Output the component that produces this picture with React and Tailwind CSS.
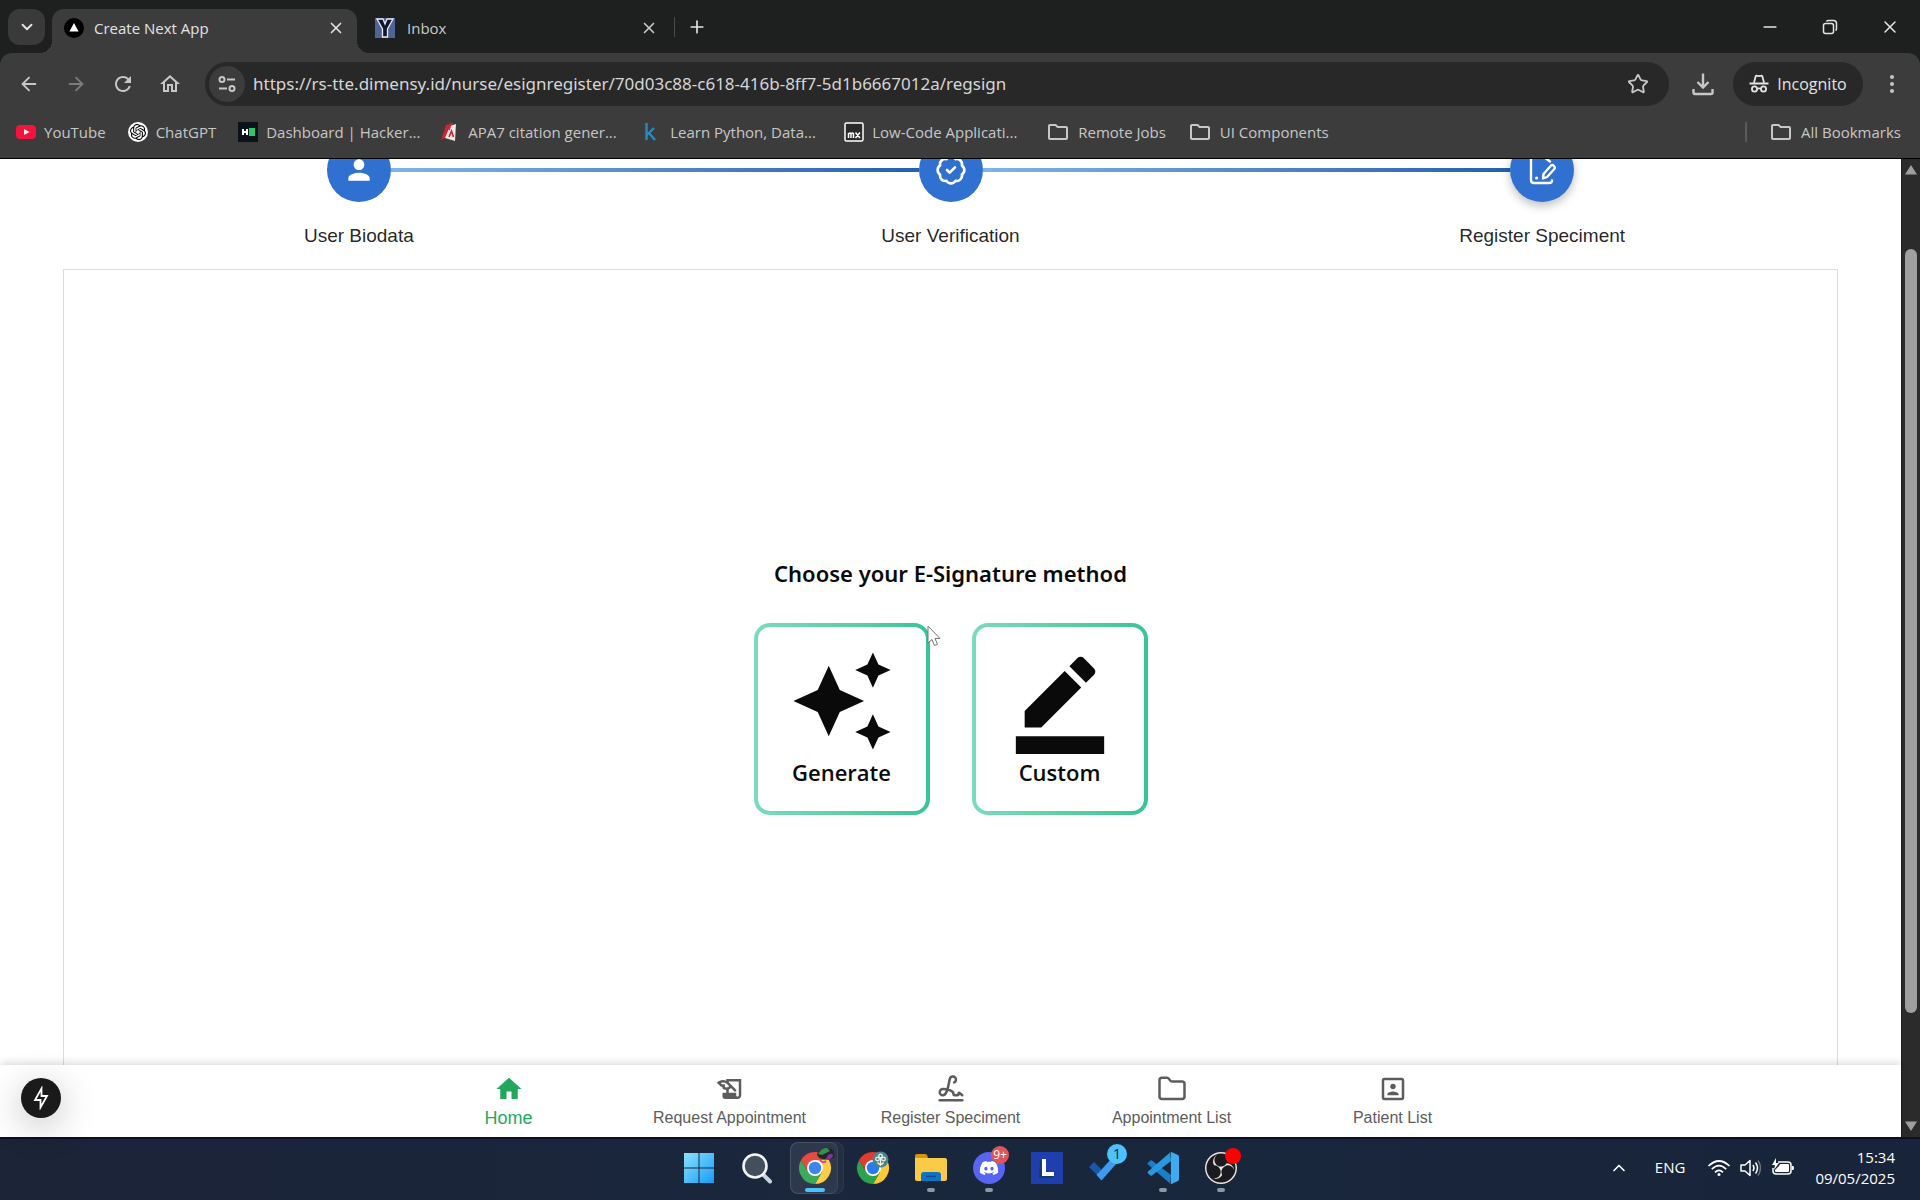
import { ArrowLeft, ArrowRight, BadgeCheck, ChevronDown, ChevronUp, Folder, Minus, MoreVertical, Plus, Signature, Star, X } from "lucide-react";
import { FaDiscord } from "react-icons/fa";
import { MdAutoAwesome, MdBorderColor, MdHome, MdOutlineFolder, MdOutlineHistoryEdu, MdOutlineHome, MdPerson, MdPortrait, MdRefresh } from "react-icons/md";
import { SiObsstudio, SiOpenai } from "react-icons/si";

/* ---------- icons ---------- */

function SiteInfoIcon() {
    return (
        <svg className="w-5 h-5" viewBox="0 0 20 20" fill="none" stroke="currentColor" strokeWidth="2">
            <circle cx="5" cy="5.5" r="2.5" />
            <path d="M10 5.5h8M2 14.5h8" />
            <circle cx="15" cy="14.5" r="2.5" />
        </svg>
    );
}

function DownloadIcon() {
    return (
        <svg className="w-6 h-6" viewBox="0 0 24 24" fill="none" stroke="currentColor" strokeWidth="2.4">
            <path d="M12 1.5v14M6.5 10l5.5 5.5 5.5-5.5M2.5 17v3.500q0 1.500 1.500 1.500h16q1.500 0 1.500-1.500V17" />
        </svg>
    );
}

function IncognitoIcon() {
    return (
        <svg className="w-5 h-5" viewBox="0 0 20 20" fill="none" stroke="currentColor" strokeWidth="1.8">
            <path d="M5 8.500 6.700 2.200q.2-.7.900-.5l2.400.5 2.400-.5q.7-.2.9.5L15 8.500M.5 9.500h19" />
            <circle cx="5.500" cy="15" r="2.600" />
            <circle cx="14.500" cy="15" r="2.600" />
            <path d="M8 14.800q2-1 4 0" />
        </svg>
    );
}

function RestoreIcon() {
    return (
        <svg className="w-4 h-4" viewBox="0 0 16 16" fill="none" stroke="currentColor" strokeWidth="1.5">
            <rect x="1.500" y="4.500" width="10" height="10" rx="2" />
            <path d="M4.500 2.500Q5 1.500 6.500 1.500h5q3 0 3 3v5q0 1.500-1 2" />
        </svg>
    );
}

function NextIcon() {
    return (
        <svg className="w-5 h-5" viewBox="0 0 20 20">
            <circle cx="10" cy="10" r="10" fill="#000" />
            <path d="M10 5l4.600 8.500H5.400z" fill="#fff" />
        </svg>
    );
}

function InboxIcon() {
    return (
        <svg className="w-5 h-5" viewBox="0 0 20 20">
            <rect width="20" height="20" fill="#4f6394" />
            <path d="M2 1h6l2 5 2-5h6l-5.500 10v8h-5v-8z" fill="#10152c" stroke="#e8ebf5" strokeWidth="1.300" />
        </svg>
    );
}

function YoutubeIcon() {
    return (
        <svg className="w-5 h-5" viewBox="0 0 20 20">
            <rect y="3" width="20" height="14" rx="4" fill="#f5123c" />
            <path d="M8 7l5.500 3L8 13z" fill="#fff" />
        </svg>
    );
}

function ChatGptIcon() {
    return (
        <span className="w-5 h-5 rounded-full bg-white text-black flex items-center justify-center">
            <SiOpenai className="w-4 h-4" />
        </span>
    );
}

function HackerRankIcon() {
    return (
        <svg className="w-5 h-5" viewBox="0 0 20 20">
            <rect width="20" height="20" fill="#0c121c" />
            <path d="M5 7v6M9 7v6M5 10h4" stroke="#fff" strokeWidth="2" />
            <rect x="11" y="6" width="6" height="8" fill="#2ec866" />
        </svg>
    );
}

function ApaIcon() {
    return (
        <svg className="w-5 h-5" viewBox="0 0 20 20">
            <path d="M6 3l7-2-3 12-9 5z" fill="#cf2334" />
            <path d="M10 4l6-2-1 17-10-3z" fill="#f3e9e9" />
            <path d="M9 15l2.500-6 2 6M11 1L9 8" stroke="#cf2334" strokeWidth="1.600" fill="none" />
        </svg>
    );
}

function KaggleIcon() {
    return (
        <svg className="w-5 h-5" viewBox="0 0 20 20" fill="none" stroke="#2a8cc4" strokeWidth="2.300">
            <path d="M4.500 1v17M12 6l-7 7M7 11l6 7" />
        </svg>
    );
}

function MendixIcon() {
    return (
        <svg className="w-5 h-5" viewBox="0 0 20 20" fill="none" stroke="#fff">
            <rect x="1" y="1" width="18" height="18" rx="1.500" fill="#2a2a2a" strokeWidth="1.500" />
            <path d="M4.500 16v-5M4.500 12q2-2 2.500 0v4M7 12q2-2 2.500 0v4M11.500 10.500l4.500 5.500M16 10.500L11.500 16" strokeWidth="1.500" />
        </svg>
    );
}

function EditDocIcon() {
    return (
        <svg className="w-8 h-8" viewBox="0 0 32 32" fill="none" stroke="#fff" strokeWidth="2.400" strokeLinecap="round" strokeLinejoin="round">
            <path d="M18 3H8Q5 3 5 6v20q0 3 3 3h15q3 0 3-2.500" />
            <path d="M18 3l6 4.500" />
            <path d="M17 24.500l.5-4.500 7.500-8.500q1.500-1 3 .5t.3 3l-7.300 8z" />
            <path d="M10.500 24h.2" strokeWidth="3" />
        </svg>
    );
}

function BoltIcon() {
    return (
        <svg className="w-6 h-6" viewBox="0 0 24 24" fill="none" stroke="#fff" strokeWidth="1.800" strokeLinejoin="miter">
            <path d="M12.500 2.500v7.500h5.500l-6.500 11.500V14H6z" />
        </svg>
    );
}

function WindowsIcon() {
    return (
        <svg className="w-8 h-8" viewBox="0 0 32 32">
            <defs>
                <linearGradient id="win" x1="0" y1="0" x2="32" y2="32" gradientUnits="userSpaceOnUse">
                    <stop stopColor="#8fe3ff" />
                    <stop offset="1" stopColor="#129af5" />
                </linearGradient>
            </defs>
            <path d="M1 1h14.500v14.500H1zM16.500 1H31v14.500H16.500zM1 16.500h14.500V31H1zM16.500 16.500H31V31H16.500z" fill="url(#win)" />
        </svg>
    );
}

function SearchIcon() {
    return (
        <svg className="w-8 h-8" viewBox="0 0 32 32" fill="none">
            <path d="M21.500 22l7.500 7.500" stroke="#c9d2de" strokeWidth="4" strokeLinecap="round" />
            <circle cx="14" cy="14" r="11.500" fill="#434e5e" stroke="#f2f4f7" strokeWidth="2.600" />
        </svg>
    );
}

function ChromeIcon({ children }) {
    return (
        <svg className="w-8 h-8 overflow-visible" viewBox="0 0 32 32">
            <path d="M16 16V8h13.860A16 16 0 0 1 16 32l7-12z" fill="#fcc934" />
            <path d="M16 16l7 4-7 12A16 16 0 0 1 2.140 8L9 20z" fill="#2ba24c" />
            <path d="M9 20L2.140 8A16 16 0 0 1 29.860 8H16z" fill="#e33b2e" />
            <circle cx="16" cy="16" r="8" fill="#fff" />
            <circle cx="16" cy="16" r="6.200" fill="#2a7bea" />
            {children}
        </svg>
    );
}

function ChromeMaskIcon() {
    return (
        <ChromeIcon>
            <path d="M18 2q6-8 10-5 8-1 7 5l1 3q-4 3-9 2-8 1-9-5z" fill="#111" />
            <path d="M19 2q4-7 9-6l3 3-8 4z" fill="#1e8a3c" />
            <path d="M29 3q5-3 5 1-3 5-7 3z" fill="#7a1fa0" />
            <path d="M21 8q3 4 6 1" stroke="#b53bc9" strokeWidth="2" fill="none" />
        </ChromeIcon>
    );
}

function ChromeProfileIcon() {
    return (
        <ChromeIcon>
            <circle cx="23.500" cy="7.500" r="8" fill="#4b8489" />
            <g fill="none" stroke="#e9f2e8" strokeWidth="1.300">
                <circle cx="23.500" cy="4" r="1.800" />
                <circle cx="20.500" cy="7" r="1.800" />
                <circle cx="26.500" cy="7" r="1.800" />
                <path d="M23.500 6v8M20.500 10.500q1.500 2 3 2t3-2" />
            </g>
        </ChromeIcon>
    );
}

function ExplorerIcon() {
    return (
        <svg className="w-8 h-8" viewBox="0 0 32 32">
            <path d="M0 4q0-2 2-2h8q2 0 2.500 2l.5 3H0z" fill="#d89313" />
            <path d="M0 6h30q2 0 2 2v19q0 2-2 2H2q-2 0-2-2z" fill="#fbcb47" />
            <path d="M6 29v-6q0-3 3-3h14q3 0 3 3v6z" fill="#1173c4" />
            <path d="M11 24.500h10" stroke="#0b4f91" strokeWidth="1.500" />
        </svg>
    );
}

function DiscordIcon() {
    return (
        <span className="relative w-8 h-8 rounded-full bg-[#5865f2] text-white flex items-center justify-center">
            <FaDiscord className="w-5 h-5" />
            <span className="absolute -top-1.5 -right-1 w-[18px] h-[18px] rounded-full bg-[#e0555a] text-[12px] leading-[18px] text-center">9+</span>
        </span>
    );
}

function LIcon() {
    return (
        <svg className="w-8 h-8" viewBox="0 0 32 32">
            <rect width="32" height="32" fill="#1f3fae" />
            <path d="M9 7l-1 19h14l2-4-9-3z" fill="#123a6b" />
            <path d="M13 7v15h10" fill="none" stroke="#fff" strokeWidth="4" />
        </svg>
    );
}

function TodoIcon() {
    return (
        <span className="relative flex">
            <svg className="w-8 h-8" viewBox="0 0 32 32">
                <path d="M5 10l9 9-5 5L0 15z" fill="#1b57a8" />
                <path d="M23 6l5 5-15.500 17.500L7.500 23z" fill="#3f9bf0" />
            </svg>
            <span className="absolute -top-2 -right-1.5 w-5 h-5 rounded-full bg-[#4cc2ff] text-[#10202f] text-[14px] leading-5 text-center">1</span>
        </span>
    );
}

function VsCodeIcon() {
    return (
        <svg className="w-8 h-8" viewBox="0 0 32 32">
            <path d="M3.500 8.500L1 10.500q-1 1 0 2L23 31.500l1-8.500L5 8.500q-.8-.6-1.500 0z" fill="#1a7fc9" />
            <path d="M3.500 23.500L1 21.500q-1-1 0-2L23 .5l1 8.500L5 23.500q-.8.600-1.500 0z" fill="#2a98dc" />
            <path d="M23 .5q.8-.8 2-.3l6 2.900q1 .5 1 1.600v22.600q0 1.100-1 1.600l-6 2.900q-1.200.500-2-.3.900.600.900-1.200V1.800q0-1.700-.9-1.300z" fill="#3cabf0" />
        </svg>
    );
}

function ObsIcon() {
    return (
        <span className="relative w-8 h-8 rounded-full bg-[#1b1b1f] text-[#e6e6e6] flex">
            <SiObsstudio className="w-8 h-8" />
            <span className="absolute -top-1 -right-1 w-4 h-4 rounded-full bg-[#ff0000]" />
        </span>
    );
}

function WifiIcon() {
    return (
        <svg className="w-6 h-5" viewBox="0 0 24 20" fill="none" stroke="currentColor" strokeWidth="1.700">
            <path d="M1.500 8q10.500-10 21 0M4.800 11.200q7.200-7 14.400 0M8 14.300q4-4 8 0" />
            <circle cx="12" cy="16.500" r="1.500" fill="currentColor" stroke="none" />
        </svg>
    );
}

function SpeakerIcon() {
    return (
        <svg className="w-6 h-5" viewBox="0 0 24 20" fill="none" stroke="currentColor" strokeWidth="1.500">
            <path d="M2 7h4l5-4.500v15L6 13H2z" strokeLinejoin="round" />
            <path d="M14 7q2 3 0 6M16.500 4.500q4 5.500 0 11" />
            <path d="M19 2.500q5 7.500 0 15" opacity=".35" />
        </svg>
    );
}

function BatteryIcon() {
    return (
        <svg className="w-6 h-5" viewBox="0 0 24 20" fill="none" stroke="currentColor" strokeWidth="1.500">
            <path d="M7 4h10q3 0 3 3v6q0 3-3 3H5q-3 0-3-3v-3" />
            <path d="M9 6h8q1 0 1 1v6q0 1-1 1H5q-1 0-1-1v-1l4-4z" fill="currentColor" stroke="none" />
            <path d="M21 8h1q1 0 1 2t-1 2h-1z" fill="currentColor" stroke="none" />
            <path d="M5 0L1 7h3l-1 5 5-7H5z" fill="currentColor" stroke="none" />
        </svg>
    );
}

/* ---------- browser ---------- */

function TabStrip() {
    return (
        <div className="h-[53px] flex items-end bg-[#1e201f] pl-2">
            <button aria-label="Search tabs" className="w-[37px] h-9 mb-2 rounded-xl bg-[#3a3a3a] flex items-center justify-center">
                <ChevronDown className="w-[18px] h-[18px]" strokeWidth={2.5} />
            </button>
            <div className="relative h-11 w-[305px] ml-[7px] rounded-t-xl bg-[#3c3c3c] flex items-center pb-1.5 px-3 text-[15px]">
                <span className="absolute bottom-0 -left-3 w-3 h-3 bg-[radial-gradient(circle_at_0_0,transparent_12px,#3c3c3c_12px)]" />
                <span className="absolute bottom-0 -right-3 w-3 h-3 bg-[radial-gradient(circle_at_100%_0,transparent_12px,#3c3c3c_12px)]" />
                <NextIcon />
                <span className="ml-2.5 flex-1">Create Next App</span>
                <button aria-label="Close Create Next App"><X className="w-[18px] h-[18px]" strokeWidth={2.2} /></button>
            </div>
            <div className="h-11 w-[299px] ml-[18px] flex items-center pb-1.5 pr-4 text-[15px] text-[#c9c9c9]">
                <InboxIcon />
                <span className="ml-3 flex-1">Inbox</span>
                <button aria-label="Close Inbox"><X className="w-[18px] h-[18px]" strokeWidth={2.2} /></button>
            </div>
            <span className="w-px h-5 mb-4 bg-[#4a4c4b]" />
            <button aria-label="New tab" className="ml-3 mb-4"><Plus className="w-5 h-5" /></button>
            <div className="ml-auto flex h-11 pb-2">
                <button aria-label="Minimize" className="w-[60px] flex items-center justify-center"><Minus className="w-5 h-5" /></button>
                <button aria-label="Restore" className="w-[60px] flex items-center justify-center"><RestoreIcon /></button>
                <button aria-label="Close window" className="w-[60px] flex items-center justify-center"><X className="w-5 h-5" strokeWidth={1.8} /></button>
            </div>
        </div>
    );
}

function Toolbar() {
    return (
        <div className="bg-[#1e201f]">
            <div className="h-[61px] flex items-center bg-[#3c3c3c] rounded-t-xl text-[#c7c7c7]">
                <div className="flex ml-[5px]">
                    <button aria-label="Back" className="w-[47px] flex justify-center"><ArrowLeft className="w-[22px] h-6" /></button>
                    <button aria-label="Forward" className="w-[47px] flex justify-center text-[#7b7b7b]"><ArrowRight className="w-[22px] h-6" /></button>
                    <button aria-label="Reload" className="w-[47px] flex justify-center"><MdRefresh className="w-6 h-6" /></button>
                    <button aria-label="Home" className="w-[47px] flex justify-center"><MdOutlineHome className="w-6 h-6" /></button>
                </div>
                <div className="flex-1 h-11 ml-3 rounded-full bg-[#282828] flex items-center pl-1">
                    <button aria-label="View site information" className="w-9 h-9 rounded-full bg-[#3c3c3c] flex items-center justify-center"><SiteInfoIcon /></button>
                    <input
                        aria-label="Address"
                        readOnly
                        className="flex-1 ml-2 bg-transparent font-['Noto_Sans',sans-serif] text-[17px] text-[#d6d6d6] outline-none"
                        value="https://rs-tte.dimensy.id/nurse/esignregister/70d03c88-c618-416b-8ff7-5d1b6667012a/regsign"
                    />
                    <button aria-label="Bookmark this page" className="mr-5"><Star className="w-[22px] h-[22px]" /></button>
                </div>
                <button aria-label="Downloads" className="ml-[22px]"><DownloadIcon /></button>
                <button className="w-[130px] h-11 ml-[18px] rounded-full bg-[#282828] flex items-center justify-center gap-2 text-base text-[#e3e3e3]">
                    <IncognitoIcon />
                    Incognito
                </button>
                <button aria-label="Menu" className="w-[57px] flex justify-center"><MoreVertical className="w-6 h-6" /></button>
            </div>
        </div>
    );
}

const bookmarks = [
    { label: "YouTube", icon: YoutubeIcon },
    { label: "ChatGPT", icon: ChatGptIcon },
    { label: "Dashboard | Hacker...", icon: HackerRankIcon, long: true },
    { label: "APA7 citation gener...", icon: ApaIcon, long: true },
    { label: "Learn Python, Data...", icon: KaggleIcon, long: true },
    { label: "Low-Code Applicati...", icon: MendixIcon, long: true },
    { label: "Remote Jobs", icon: MdOutlineFolder },
    { label: "UI Components", icon: MdOutlineFolder },
];

function BookmarksBar() {
    return (
        <div className="h-[45px] flex items-center gap-[22px] bg-[#3c3c3c] border-b border-black pl-4 pr-[19px] pb-2 text-[15px] text-[#c7c7c7]">
            {bookmarks.map(item => (
                <a key={item.label} href="#" className="flex items-center gap-2 whitespace-nowrap">
                    <item.icon className="w-6 h-6" />
                    <span className={item.long ? "w-[152px]" : ""}>{item.label}</span>
                </a>
            ))}
            <span className="ml-auto w-0.5 h-5 bg-[#5c5c5c]" />
            <a href="#" className="flex items-center gap-2 whitespace-nowrap">
                <MdOutlineFolder className="w-6 h-6" />
                All Bookmarks
            </a>
        </div>
    );
}

/* ---------- page ---------- */

function StepCircle({ children }) {
    return (
        <span className="w-16 h-16 shrink-0 rounded-full bg-[#3070d0] text-white flex items-center justify-center last:shadow-[0_4px_10px_rgba(0,0,0,0.25)]">
            {children}
        </span>
    );
}

function Stepper() {
    return (
        <div className="-mt-[21px]">
            <div className="flex items-center px-[calc(16.667%-32px)]">
                <StepCircle><MdPerson className="w-8 h-8" /></StepCircle>
                <span className="flex-1 h-1 bg-linear-to-r from-[#7db4ee] to-[#285fac]" />
                <StepCircle><BadgeCheck className="w-8 h-8" /></StepCircle>
                <span className="flex-1 h-1 bg-linear-to-r from-[#7db4ee] to-[#285fac]" />
                <StepCircle><EditDocIcon /></StepCircle>
            </div>
            <div className="grid grid-cols-3 mt-5 text-center text-[19px] leading-7 text-black/87">
                <span>User Biodata</span>
                <span>User Verification</span>
                <span>Register Speciment</span>
            </div>
        </div>
    );
}

function MethodButton({ icon: Icon, label }) {
    return (
        <button className="w-44 h-48 rounded-2xl p-1 bg-linear-to-r from-[#7adcb9] to-[#37c593]">
            <span className="h-full rounded-xl bg-white flex flex-col items-center justify-center">
                <Icon className="w-[106px] h-[106px]" />
                <span className="text-[22px] leading-9 font-semibold">{label}</span>
            </span>
        </button>
    );
}

const navItems = [
    { label: "Home", icon: MdHome },
    { label: "Request Appointment", icon: MdOutlineHistoryEdu },
    { label: "Register Speciment", icon: Signature },
    { label: "Appointment List", icon: Folder },
    { label: "Patient List", icon: MdPortrait },
];

function BottomNav() {
    return (
        <nav className="relative h-[72px] bg-white flex justify-center font-['Liberation_Sans',Arial,sans-serif] shadow-[0_-2px_8px_rgba(0,0,0,0.15)]">
            {navItems.map(item => (
                <a
                    key={item.label}
                    href="#"
                    className={`w-[221px] flex flex-col items-center pt-[9px] ${item.label === "Home" ? "text-[#22a85c] text-lg" : "text-[#5c5c5c] text-base"}`}
                >
                    <item.icon className="w-[30px] h-[30px]" />
                    <span className="leading-7">{item.label}</span>
                </a>
            ))}
            <button aria-label="Open dev tools" className="absolute left-[21px] top-[13px] w-10 h-10 rounded-full bg-[#1a1a1a] flex items-center justify-center shadow-[0_8px_36px_rgba(0,0,0,0.25)]">
                <BoltIcon />
            </button>
        </nav>
    );
}

function Page() {
    return (
        <div className="flex-1 min-w-0 flex flex-col bg-white text-[#0a0a0a]">
            <main className="flex-1 min-h-0 overflow-hidden px-[63px] flex flex-col">
                <div className="font-['Liberation_Sans',Arial,sans-serif]"><Stepper /></div>
                <section className="flex-1 mt-[19px] border border-b-0 border-[#dcdcdc] pt-[34px] flex flex-col items-center justify-center">
                    <h1 className="font-['Noto_Sans',sans-serif] text-[22px] leading-9 font-semibold">Choose your E-Signature method</h1>
                    <div className="flex gap-[42px] mt-8">
                        <MethodButton icon={MdAutoAwesome} label="Generate" />
                        <MethodButton icon={MdBorderColor} label="Custom" />
                    </div>
                </section>
            </main>
            <BottomNav />
        </div>
    );
}

function Scrollbar() {
    return (
        <div className="w-[19px] bg-[#2b2b2b] border-l border-[#1e1e1e] flex flex-col items-center py-[5px]">
            <svg className="w-3 h-3" viewBox="0 0 12 12" fill="#9f9f9f"><path d="M6 1l6 9.500H0z" /></svg>
            <span className="w-3 flex-1 mt-[73px] mb-[107px] rounded-full bg-[#9f9f9f]" />
            <svg className="w-3 h-3" viewBox="0 0 12 12" fill="#9f9f9f"><path d="M6 11l6-9.500H0z" /></svg>
        </div>
    );
}

/* ---------- taskbar ---------- */

const apps = [
    { name: "Start", icon: WindowsIcon },
    { name: "Search", icon: SearchIcon },
    { name: "Chrome Incognito", icon: ChromeMaskIcon, state: "active" },
    { name: "Chrome", icon: ChromeProfileIcon },
    { name: "File Explorer", icon: ExplorerIcon, state: "open" },
    { name: "Discord", icon: DiscordIcon, state: "open" },
    { name: "L", icon: LIcon },
    { name: "To Do", icon: TodoIcon },
    { name: "Visual Studio Code", icon: VsCodeIcon, state: "open" },
    { name: "OBS Studio", icon: ObsIcon, state: "open" },
];

function Taskbar() {
    return (
        <footer className="h-[63px] pb-1 grid grid-cols-[1fr_auto_1fr] items-center bg-linear-to-r from-[#1c2438] via-[#19273d] to-[#182439] border-t-2 border-[#0b1120] text-white text-[15px]">
            <div />
            <div className="flex">
                {apps.map(app => (
                    <button
                        key={app.name}
                        aria-label={app.name}
                        className="relative w-[58px] h-[52px] flex items-center justify-center"
                    >
                        {app.state === "active" && (
                            <>
                                <span className="absolute inset-y-0 left-1 right-0 rounded-lg bg-white/4 border border-white/5" />
                                <span className="absolute inset-y-0 left-1 right-1.5 rounded-lg bg-white/5 border border-white/8" />
                            </>
                        )}
                        <app.icon />
                        {app.state && (
                            <span className={`absolute bottom-0.5 h-1 rounded-full ${app.state === "active" ? "w-5 bg-[#4cc2ff]" : "w-2 bg-[#8d97a5]"}`} />
                        )}
                    </button>
                ))}
            </div>
            <div className="flex items-center justify-end pr-[25px]">
                <button aria-label="Show hidden icons" className="mr-[26px]"><ChevronUp className="w-5 h-5" /></button>
                <button className="mr-[22px]">ENG</button>
                <button aria-label="Network, volume and battery" className="flex gap-2 mr-5">
                    <WifiIcon />
                    <SpeakerIcon />
                    <BatteryIcon />
                </button>
                <div className="text-right leading-[21px]">
                    <div>15:34</div>
                    <div>09/05/2025</div>
                </div>
            </div>
        </footer>
    );
}

function Cursor() {
    return (
        <svg className="absolute left-[927px] top-[625px] w-[14px] h-[22px]" viewBox="0 0 14 22">
            <path d="M1 1v17l4-3.500 2.500 6 3-1.200L8 13.500h5z" fill="#fff" stroke="#777" strokeWidth="1" />
        </svg>
    );
}

export default function App() {
    return (
        <div className="relative h-screen flex flex-col overflow-hidden text-[#e3e3e3] font-['Open_Sans','Noto_Sans',sans-serif]">
            <TabStrip />
            <Toolbar />
            <BookmarksBar />
            <div className="flex-1 min-h-0 flex">
                <Page />
                <Scrollbar />
            </div>
            <Taskbar />
            <Cursor />
        </div>
    );
}
